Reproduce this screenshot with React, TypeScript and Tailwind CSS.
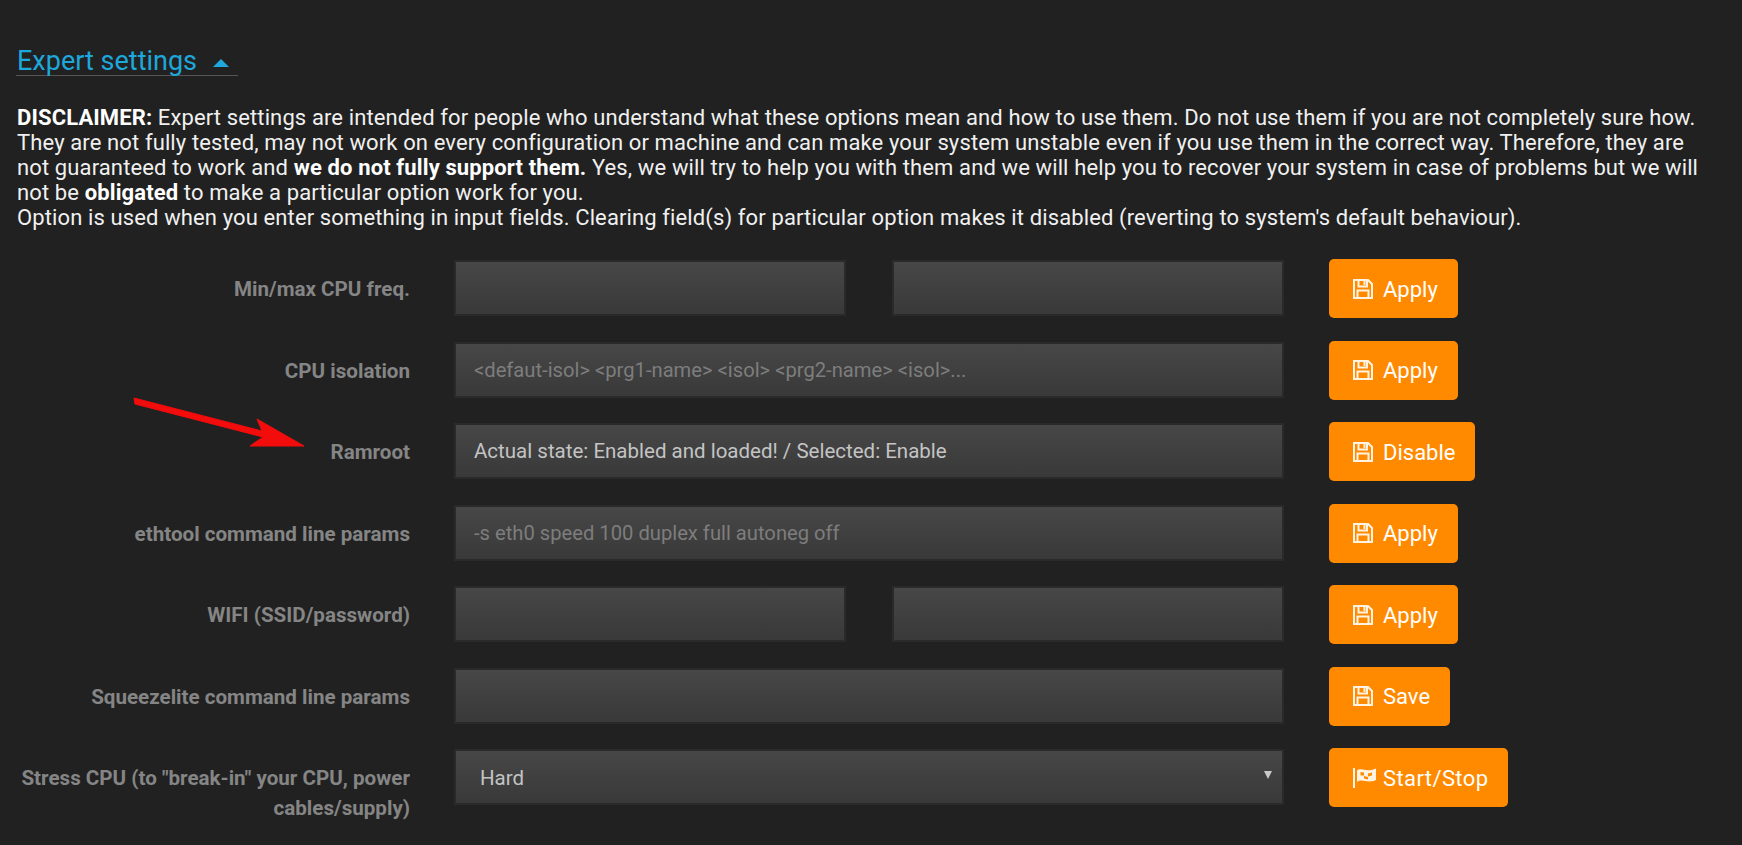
import React from 'react';

const font = { fontFamily: 'Roboto, sans-serif' };

const SaveIcon = () => (
  <svg className="w-[20px] h-[20px] shrink-0" viewBox="0 0 20 20" fill="none" stroke="#fff4e3" strokeWidth="2">
    <path d="M1 1H15L19 5V19H1Z" />
    <path d="M5.5 1V7.5H14V1" />
    <path d="M4.5 19V11.5H15.5V19" />
    <rect x="10.5" y="2" width="2" height="4" fill="#fff4e3" stroke="none" />
  </svg>
);

const FlagIcon = () => (
  <svg className="w-[23px] h-[22px] shrink-0" viewBox="0 0 23 22">
    <path d="M0 1H2V21H0Z" fill="#fff4e3" />
    <path d="M4 3.5C9 0 13 6 23 1.5V13C14 17 9 11 4 15Z" fill="#fff4e3" />
    <path d="M7.5 5L11 5.5V8.5L7.5 8.5ZM15 6.5L19 5.5V8.5L15 9.5ZM11 9L15 10V12.5L11 11.5Z" fill="#ff8a00" />
  </svg>
);

const Field: React.FC<{ placeholder?: string; value?: string }> = ({ placeholder, value }) => (
  <div className="flex-1 min-w-0 h-[56px] flex items-center px-[18px] pt-[1px] bg-gradient-to-b from-[#474747] to-[#393939] border-2 border-[#2a2a2a]">
    {value ? <span className="text-[20.5px] text-[#c4c4c4]">{value}</span> : <span className="text-[20.2px] text-[#7d7d7d]">{placeholder}</span>}
  </div>
);

const Btn: React.FC<{ label: string; flag?: boolean }> = ({ label, flag }) => (
  <button className={`h-[59px] pl-6 pr-5 bg-[#ff8a00] rounded-[5px] flex items-center text-white text-[22px] shrink-0 ${flag ? 'gap-[7px] tracking-[0.4px]' : 'gap-[10px]'}`}>
    {flag ? <FlagIcon /> : <SaveIcon />}
    <span className="mt-[1px]">{label}</span>
  </button>
);

const Row: React.FC<{ label: React.ReactNode; children: React.ReactNode; btn: string; flag?: boolean }> = ({ label, children, btn, flag }) => (
  <div className="flex items-start h-[59px]">
    <div className="w-[410px] shrink-0 pt-[15px] text-right text-[20.6px] leading-[30px] font-bold text-[#858585]">{label}</div>
    <div className="w-[830px] ml-[44px] mt-[1px] flex gap-[46px] shrink-0">{children}</div>
    <div className="ml-[45px]"><Btn label={btn} flag={flag} /></div>
  </div>
);

export default function App() {
  return (
    <div className="h-[845px] overflow-hidden bg-[#212121] relative" style={font}>
      <div className="pt-[47px] pl-[17px]">
        <div className="w-[222px] h-[29px] border-b border-[#555555] -ml-[1px] pl-[1px] flex items-center gap-[16px] text-[27px] text-[#1ea7db]">
          <span>Expert settings</span>
          <span className="mt-[3px] w-0 h-0 border-x-[8.5px] border-x-transparent border-b-[8px] border-b-[#1ea7db]" />
        </div>
        <p className="mt-[29px] text-[22px] tracking-[0.12px] leading-[25px] text-[#f0f0f0] whitespace-nowrap">
          <b className="text-white">DISCLAIMER:</b> Expert settings are intended for people who understand what these options mean and how to use them. Do not use them if you are not completely sure how.<br />
          They are not fully tested, may not work on every configuration or machine and can make your system unstable even if you use them in the correct way. Therefore, they are<br />
          not guaranteed to work and <b className="text-white">we do not fully support them.</b> Yes, we will try to help you with them and we will help you to recover your system in case of problems but we will<br />
          not be <b className="text-white">obligated</b> to make a particular option work for you.<br />
          Option is used when you enter something in input fields. Clearing field(s) for particular option makes it disabled (reverting to system's default behaviour).
        </p>
      </div>
      <div className="mt-[29px] flex flex-col gap-[22.5px]">
        <Row label="Min/max CPU freq." btn="Apply"><Field /><Field /></Row>
        <Row label="CPU isolation" btn="Apply"><Field placeholder="<defaut-isol> <prg1-name> <isol> <prg2-name> <isol>..." /></Row>
        <Row label="Ramroot" btn="Disable"><Field value="Actual state: Enabled and loaded! / Selected: Enable" /></Row>
        <Row label="ethtool command line params" btn="Apply"><Field placeholder="-s eth0 speed 100 duplex full autoneg off" /></Row>
        <Row label="WIFI (SSID/password)" btn="Apply"><Field /><Field /></Row>
        <Row label="Squeezelite command line params" btn="Save"><Field /></Row>
        <Row label={<>Stress CPU (to "break-in" your CPU, power<br />cables/supply)</>} btn="Start/Stop" flag>
          <div className="relative flex-1">
            <Field value=" " />
            <span className="absolute left-[26px] top-[14px] text-[20.5px] text-[#c4c4c4]">Hard</span>
            <span className="absolute right-[12px] top-[22px] w-0 h-0 border-x-[4px] border-x-transparent border-t-[8px] border-t-[#c8c8c8]" />
          </div>
        </Row>
      </div>
      <svg className="absolute left-0 top-0 pointer-events-none" width="320" height="460" viewBox="0 0 320 460">
        <path d="M134 398 L262 431 L257 419 L304 446 L250 446 L263 437 L135 404 Z" fill="#f20c0c" stroke="#f20c0c" strokeWidth="1" strokeLinejoin="round" />
      </svg>
    </div>
  );
}
